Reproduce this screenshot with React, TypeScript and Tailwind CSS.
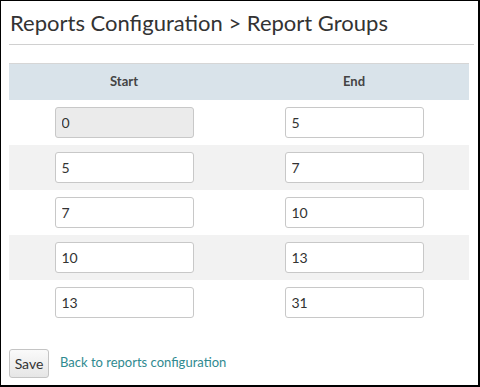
const ROWS = [
  { start: '0', end: '5', locked: true },
  { start: '5', end: '7' },
  { start: '7', end: '10' },
  { start: '10', end: '13' },
  { start: '13', end: '31' },
];

export default function App() {
  return (
    <div className="w-[480px] h-[387px] overflow-hidden bg-white border-t border-l border-r-2 border-b-2 border-black font-['Lato','Liberation_Sans',sans-serif] text-[#333]">
      <div className="pl-[8px] pr-[4px]">
        <h1 className="pt-[8px] pb-[7px] pl-px text-[22px] leading-[28px] font-normal text-[#333] border-b border-[#d0d0d0]">
          Reports Configuration &gt; Report Groups
        </h1>

        <table className="mt-[18px] w-[460px] border-collapse">
          <thead>
            <tr className="bg-[#d9e3ea] border-t border-[#d6d6d6]">
              <th className="h-[36px] w-1/2 text-[13px] font-bold text-[#444]">Start</th>
              <th className="h-[36px] w-1/2 text-[13px] font-bold text-[#444]">End</th>
            </tr>
          </thead>
          <tbody>
            {ROWS.map((row, idx) => (
              <tr key={idx} className={idx % 2 === 1 ? 'bg-[#f2f2f2]' : 'bg-white'}>
                <td className="h-[45px] text-center">
                  <RangeInput value={row.start} disabled={row.locked} />
                </td>
                <td className="h-[45px] text-center">
                  <RangeInput value={row.end} />
                </td>
              </tr>
            ))}
          </tbody>
        </table>

        <div className="mt-[24px] flex items-center gap-[11px]">
          <button className="h-[29px] w-[40px] rounded-[3px] border border-[#c4c4c4] bg-gradient-to-b from-[#fafafa] to-[#e6e6e6] text-[14px] text-[#333]">
            Save
          </button>
          <a className="text-[13px] text-[#2f8a90]">Back to reports configuration</a>
        </div>
      </div>
    </div>
  );
}

function RangeInput({ value, disabled }: { value: string; disabled?: boolean }) {
  return (
    <input
      readOnly
      value={value}
      className={`w-[139px] h-[31px] px-[6px] align-middle rounded-[3px] border border-[#c8c8c8] text-[14px] text-[#333] outline-none ${
        disabled ? 'bg-[#ebebeb]' : 'bg-white'
      }`}
    />
  );
}
